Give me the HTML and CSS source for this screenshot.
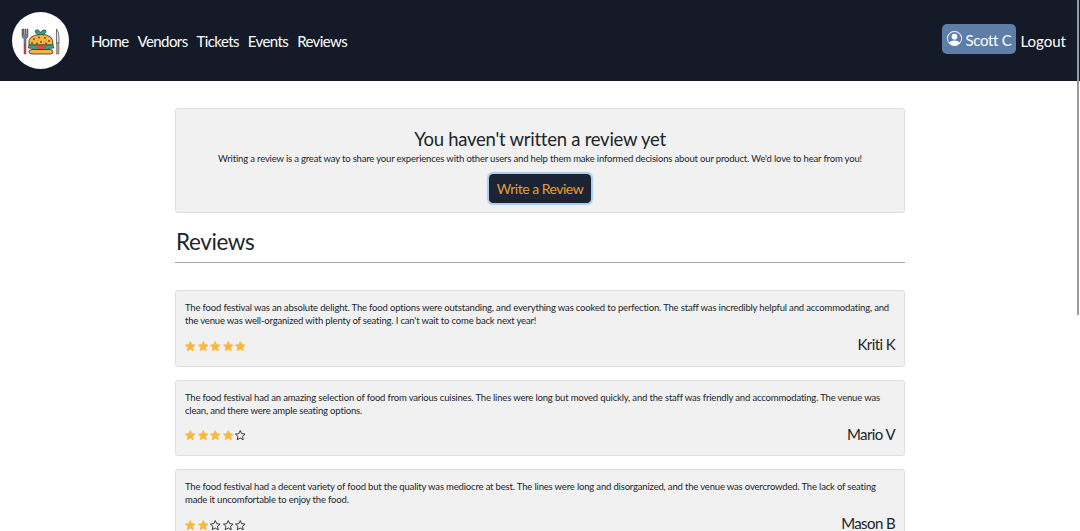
FILE: index.html
```html
<!DOCTYPE html>
<html lang="en">
<head>
<meta charset="utf-8">
<title>Reviews</title>
<link rel="stylesheet" href="styles.css">
</head>
<body>
<svg class="defs" width="0" height="0" aria-hidden="true">
  <defs>
    <symbol id="star" viewBox="0 0 16 16"><path d="M8 .8l2.200 4.800 5.200.6-3.900 3.500 1.100 5.200L8 12.300l-4.600 2.600 1.100-5.200L.6 6.200l5.200-.6z"/></symbol>
  </defs>
</svg>
<header class="navbar">
  <a class="logo" href="#" aria-label="Food festival">
    <svg viewBox="0 0 57 57" width="57" height="57">
      <circle cx="28.500" cy="28.500" r="28.500" fill="#fff"/>
      <path d="M10 17v7q0 2 2 2.500V33h2v-6.500q2-.5 2-2.500v-7h-1v6h-1v-6h-1v6h-1v-6h-1v6h-.5v-6z" fill="#7d828a" stroke="#3a3f4a" stroke-width=".5"/>
      <rect x="12" y="33" width="2" height="9" fill="#e0473f" stroke="#3a3f4a" stroke-width=".4"/>
      <path d="M44.500 17q2.500 2.500 2.500 9v5h-2.500z" fill="#e4e7ea" stroke="#3a3f4a" stroke-width=".7"/>
      <rect x="44.500" y="31" width="2.500" height="11" fill="#c09a6b" stroke="#3a3f4a" stroke-width=".4"/>
      <path d="M23 19q3-3 5.500 1.500q2-4 5.500-2q0 4-5 5q-5 0-6-4.500z" fill="#2aa58e" stroke="#1f2a38" stroke-width=".6"/>
      <path d="M17 33q-2-10 11.500-10.500T41 33z" fill="#f5b342" stroke="#2b2b33" stroke-width=".8"/>
      <circle cx="22" cy="27" r=".9" fill="#6a4323"/><circle cx="27" cy="25.500" r=".9" fill="#6a4323"/><circle cx="33" cy="26" r=".9" fill="#6a4323"/><circle cx="37" cy="29" r=".9" fill="#6a4323"/><circle cx="20" cy="31" r=".9" fill="#6a4323"/><circle cx="29" cy="30" r=".9" fill="#6a4323"/><circle cx="25" cy="31.500" r=".9" fill="#6a4323"/><circle cx="34" cy="31.500" r=".9" fill="#6a4323"/>
      <path d="M17 33h24l1 3-5 .5-2 1.500H23l-2-1.500-5-.5z" fill="#2aa58e" stroke="#2b2b33" stroke-width=".6"/>
      <path d="M24 33.500h10q-1 4-5 4t-5-4z" fill="#e0473f"/>
      <path d="M20 37.500h18q3 0 3 2.300t-3 2.200H20q-3 0-3-2.200t3-2.300z" fill="#f5b342" stroke="#2b2b33" stroke-width=".8"/>
    </svg>
  </a>
  <nav class="nav-links">
    <a href="#">Home</a>
    <a href="#">Vendors</a>
    <a href="#">Tickets</a>
    <a href="#">Events</a>
    <a href="#">Reviews</a>
  </nav>
  <div class="nav-user">
    <a class="user-btn" href="#">
      <svg viewBox="0 0 16 16" width="15" height="15" fill="#fff" aria-hidden="true">
        <path d="M11 6a3 3 0 1 1-6 0 3 3 0 0 1 6 0"/>
        <path fill-rule="evenodd" d="M0 8a8 8 0 1 1 16 0A8 8 0 0 1 0 8m8-7a7 7 0 0 0-5.468 11.370C3.242 11.226 4.805 10 8 10s4.757 1.225 5.468 2.370A7 7 0 0 0 8 1"/>
      </svg>
      <span class="user-name">Scott C</span>
    </a>
    <a class="logout" href="#">Logout</a>
  </div>
</header>

<main class="content">
  <section class="panel cta">
    <h2 class="cta-title">You haven't written a review yet</h2>
    <p class="cta-text">Writing a review is a great way to share your experiences with other users and help them make informed decisions about our product. We'd love to hear from you!</p>
    <button class="cta-btn" type="button">Write a Review</button>
  </section>

  <h1 class="section-title">Reviews</h1>
  <hr class="rule">

  <article class="panel review">
    <p class="review-text">The food festival was an absolute delight. The food options were outstanding, and everything was cooked to perfection. The staff was incredibly helpful and accommodating, and the venue was well-organized with plenty of seating. I can't wait to come back next year!</p>
    <div class="review-foot">
      <div class="stars">
        <svg class="star on"><use href="#star"/></svg><svg class="star on"><use href="#star"/></svg><svg class="star on"><use href="#star"/></svg><svg class="star on"><use href="#star"/></svg><svg class="star on"><use href="#star"/></svg>
      </div>
      <span class="author">Kriti K</span>
    </div>
  </article>

  <article class="panel review">
    <p class="review-text">The food festival had an amazing selection of food from various cuisines. The lines were long but moved quickly, and the staff was friendly and accommodating. The venue was clean, and there were ample seating options.</p>
    <div class="review-foot">
      <div class="stars">
        <svg class="star on"><use href="#star"/></svg><svg class="star on"><use href="#star"/></svg><svg class="star on"><use href="#star"/></svg><svg class="star on"><use href="#star"/></svg><svg class="star"><use href="#star"/></svg>
      </div>
      <span class="author">Mario V</span>
    </div>
  </article>

  <article class="panel review">
    <p class="review-text">The food festival had a decent variety of food but the quality was mediocre at best. The lines were long and disorganized, and the venue was overcrowded. The lack of seating made it uncomfortable to enjoy the food.</p>
    <div class="review-foot">
      <div class="stars">
        <svg class="star on"><use href="#star"/></svg><svg class="star on"><use href="#star"/></svg><svg class="star"><use href="#star"/></svg><svg class="star"><use href="#star"/></svg><svg class="star"><use href="#star"/></svg>
      </div>
      <span class="author">Mason B</span>
    </div>
  </article>
</main>
<div class="scroll-thumb"></div>
</body>
</html>
```
FILE: styles.css
```css
* { box-sizing: border-box; }
html, body { height: 100%; overflow: hidden; }
body {
  margin: 0;
  background: #fff;
  color: #212529;
  font-family: "Lato", "Open Sans", sans-serif;
  position: relative;
}
.defs { position: absolute; }
a { color: inherit; text-decoration: none; }

.navbar {
  height: 81px;
  background: #141a28;
  color: #fff;
  display: flex;
  align-items: center;
  padding: 0 14px 0 12px;
}
.logo { display: block; width: 57px; height: 57px; }
.logo svg { display: block; }
.nav-links {
  display: flex;
  gap: 9px;
  margin-left: 22px;
  font-size: 15px;
  letter-spacing: -.6px;
}
.nav-user {
  margin-left: auto;
  display: flex;
  align-items: center;
  gap: 4px;
  font-size: 15px;
}
.user-btn {
  display: flex;
  align-items: center;
  gap: 3px;
  height: 30px;
  width: 74px;
  margin-bottom: 4px;
  justify-content: center;
  background: #5e7ea8;
  border-radius: 5px;
  letter-spacing: -.3px;
}
.user-name { padding-top: 3px; }

.content {
  width: 730px;
  margin: 27px auto 0;
}
.panel {
  background: #f1f1f1;
  border: 1px solid #dedede;
  border-radius: 3px;
}
.cta {
  height: 105px;
  padding-top: 19px;
  text-align: center;
}
.cta-title {
  margin: 0;
  font-size: 18.500px;
  font-weight: 400;
  line-height: 22px;
  letter-spacing: -.25px;
}
.cta-text {
  margin: 2px 0 0;
  font-size: 9.500px;
  line-height: 14px;
  letter-spacing: -.17px;
}
.cta-btn {
  display: block;
  margin: 8px auto 0;
  width: 102px;
  height: 29px;
  background: #1c2333;
  color: #e3a033;
  border: 1px solid #1c2333;
  border-radius: 4px;
  box-shadow: 0 0 0 2px #a9cdf0;
  font: 400 14px "Lato", "Open Sans", sans-serif;
  letter-spacing: -.5px;
  padding: 0;
}
.section-title {
  margin: 13px 0 0 1px;
  font-size: 22.500px;
  font-weight: 400;
  line-height: 32px;
  letter-spacing: -.4px;
}
.rule {
  margin: 4px 0 27px;
  border: 0;
  border-top: 1px solid #a5a5ad;
}
.review {
  height: 76.500px;
  padding: 10px 9px 0;
  margin-bottom: 13px;
}
.review-text {
  margin: 0;
  font-size: 9.500px;
  line-height: 13px;
  letter-spacing: -.17px;
}
.review-foot {
  display: flex;
  justify-content: space-between;
  align-items: center;
  margin-top: 8px;
}
.stars { display: flex; gap: 2px; margin-top: 4px; }
.star {
  width: 10.500px;
  height: 10.500px;
  fill: none;
  stroke: #1b1f28;
  stroke-width: 1.300;
}
.star.on { fill: #fbb73c; stroke: #fbb73c; }
.author { font-size: 15px; letter-spacing: -.6px; }

.scroll-thumb {
  position: absolute;
  top: 0;
  right: 1px;
  width: 2px;
  height: 315px;
  background: #9a9a9a;
}
```
